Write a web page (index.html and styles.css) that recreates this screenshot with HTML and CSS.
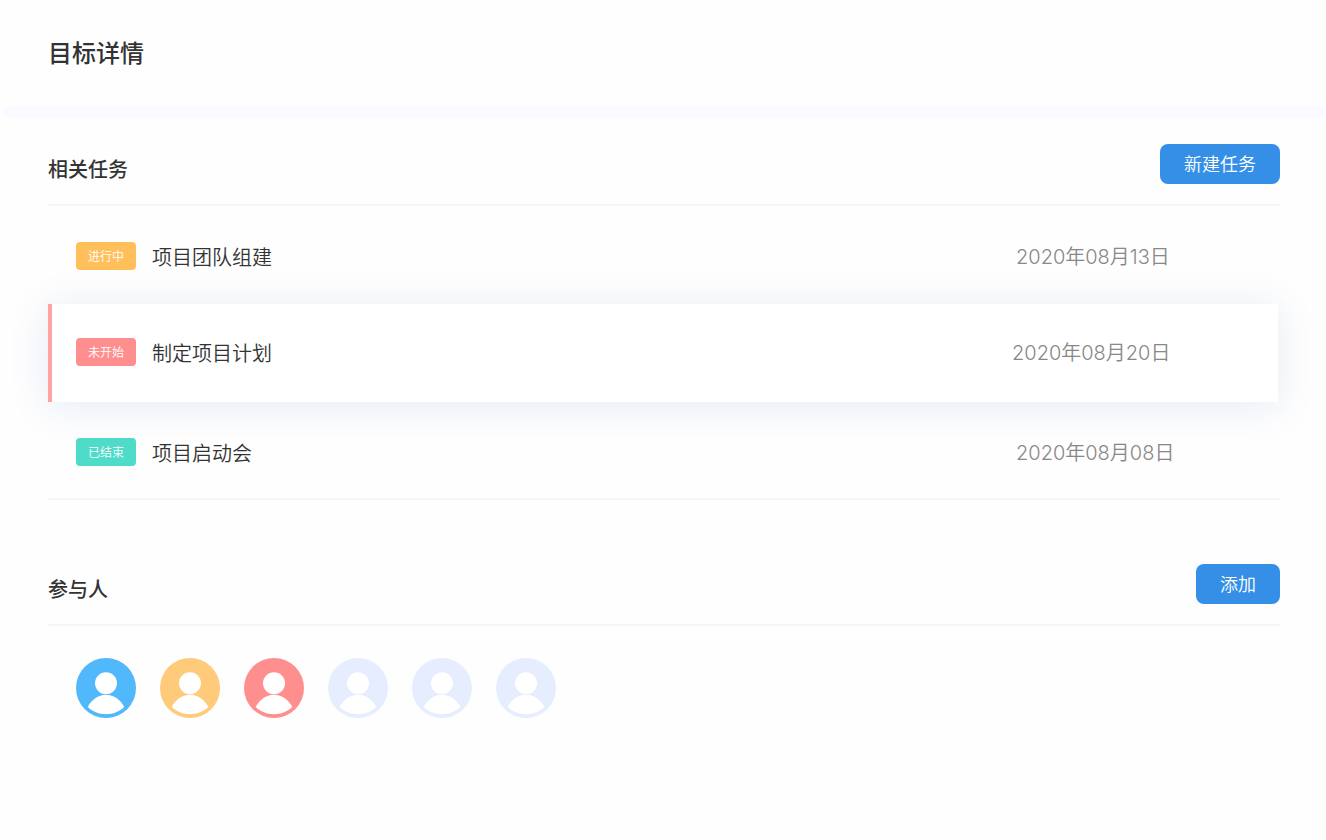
FILE: index.html
```html
<!DOCTYPE html>
<html lang="zh-CN">
  <head>
    <meta charset="UTF-8" />
    <meta name="viewport" content="width=device-width, initial-scale=1.0" />
    <title>目标详情</title>
    <link rel="stylesheet" href="styles.css">
  </head>
  <body>
    <!-- shared avatar shape, coloured through currentColor -->
    <svg class="symbols" aria-hidden="true">
      <symbol id="avatar" viewBox="0 0 60 60">
        <circle cx="30" cy="30" r="30" fill="currentColor" />
        <circle cx="30" cy="25.3" r="11" fill="#fff" />
        <path d="M11.8 49C15.5 41.8 22 36.8 30 36.8S44.500 41.800 48.200 49C43.500 53.700 37 56.200 30 56.200S16.500 53.700 11.800 49Z" fill="#fff" />
      </symbol>
    </svg>

    <header class="page-header">
      <h1>目标详情</h1>
    </header>

    <main>
      <section class="section tasks">
        <div class="section-head">
          <h2>相关任务</h2>
          <button type="button" class="btn">新建任务</button>
        </div>
        <ul class="task-list">
          <li class="task">
            <span class="tag tag-doing">进行中</span>
            <span class="task-name">项目团队组建</span>
            <time class="task-date" datetime="2020-08-13">2020年08月13日</time>
          </li>
          <li class="task active">
            <span class="tag tag-todo">未开始</span>
            <span class="task-name">制定项目计划</span>
            <time class="task-date" datetime="2020-08-20">2020年08月20日</time>
          </li>
          <li class="task">
            <span class="tag tag-done">已结束</span>
            <span class="task-name">项目启动会</span>
            <time class="task-date" datetime="2020-08-08">2020年08月08日</time>
          </li>
        </ul>
      </section>

      <section class="section">
        <div class="section-head">
          <h2>参与人</h2>
          <button type="button" class="btn">添加</button>
        </div>
        <div class="members">
          <svg class="avatar avatar-blue"><use href="#avatar" /></svg>
          <svg class="avatar avatar-orange"><use href="#avatar" /></svg>
          <svg class="avatar avatar-red"><use href="#avatar" /></svg>
          <svg class="avatar"><use href="#avatar" /></svg>
          <svg class="avatar"><use href="#avatar" /></svg>
          <svg class="avatar"><use href="#avatar" /></svg>
        </div>
      </section>
    </main>
  </body>
</html>
```

FILE: styles.css
```css
* {
  box-sizing: border-box;
}
body {
  margin: 0;
  background-color: #fefefe;
  color: #333;
  font-family: "Noto Sans CJK SC", sans-serif;
  font-weight: 350;
}
h1,
h2,
ul {
  margin: 0;
  padding: 0;
}
h1,
h2 {
  font-weight: 500;
}
.symbols {
  display: none;
}

/* Header */
.page-header {
  padding: 36px 48px;
}
h1 {
  padding-bottom: 2px;
  font-size: 24px;
  line-height: 32px;
}
main {
  border-top: 12px solid #fafbff;
  margin: 0 2px 0 4px;
}

/* Sections */
.section {
  padding: 26px 44px 0;
}
.tasks {
  margin-bottom: 38px;
}
.section-head {
  display: flex;
  justify-content: space-between;
  border-bottom: 2px solid #f6f7fc;
  padding-bottom: 20px;
}
h2 {
  padding-top: 10px;
  font-size: 20px;
  line-height: 30px;
}
.btn {
  height: 40px;
  padding: 0 24px 2px;
  border: none;
  border-radius: 8px;
  background-color: #358fe6;
  color: #fff;
  font-family: inherit;
  font-size: 18px;
  font-weight: inherit;
  line-height: 38px;
  cursor: pointer;
}

/* Tasks */
.task-list {
  list-style: none;
  border-bottom: 2px solid #f6f7fc;
}
.task {
  display: flex;
  align-items: center;
  padding: 35px 28px 31px;
}
.task:first-child {
  padding-bottom: 33px;
}
.task.active {
  margin-right: 2px;
  padding: 33px 30px 35px 24px;
  border-left: 4px solid #ffa2a2;
  background-color: #fff;
  box-shadow: 0 4px 40px rgba(60, 90, 170, 0.12);
}
.tag {
  padding: 0 12px;
  border-radius: 4px;
  color: #fff;
  font-size: 12px;
  line-height: 28px;
}
.tag-doing {
  background-color: #ffc05c;
}
.tag-todo {
  background-color: #ff8f8f;
}
.tag-done {
  background-color: #4edbc8;
}
.task-name,
.task-date {
  padding-top: 2px;
  font-size: 20px;
  line-height: 28px;
}
.task-name {
  flex: 1;
  margin-left: 16px;
}
.task-date {
  width: 236px;
  color: #888;
  font-family: Inter, "Noto Sans CJK SC", sans-serif;
}

/* Members */
.members {
  display: flex;
  gap: 24px;
  padding: 32px 28px;
}
.avatar {
  width: 60px;
  height: 60px;
  color: #e5edfe;
}
.avatar-blue {
  color: #50b8fb;
}
.avatar-orange {
  color: #ffca7a;
}
.avatar-red {
  color: #ff8f8f;
}
```
